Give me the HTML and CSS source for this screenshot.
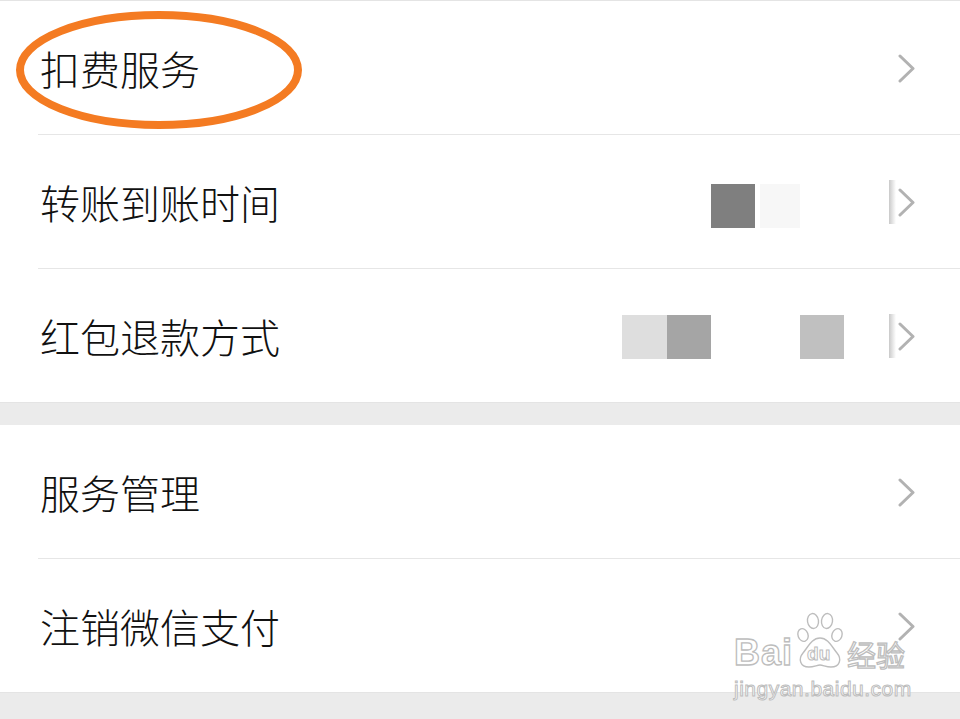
FILE: index.html
```html
<!DOCTYPE html>
<html lang="zh">
<head>
<meta charset="utf-8">
<link rel="stylesheet" href="styles.css">
</head>
<body>
<div class="page">
  <div class="topline"></div>
  <section class="group">
    <div class="row first">
      <span class="label">扣费服务</span>
      <span class="spacer"></span>
      <svg class="chev" viewBox="0 0 17 29"><path d="M2 2 L15 14.5 L2 27" /></svg>
      <svg class="ring" viewBox="0 0 300 130"><ellipse cx="143" cy="65" rx="139" ry="55" /></svg>
    </div>
    <div class="row">
      <span class="label">转账到账时间</span>
      <span class="spacer"></span>
      <span class="blur b2">
        <i class="blk dark"></i><i class="blk faint gap5"></i>
      </span>
      <i class="fade"></i>
      <svg class="chev" viewBox="0 0 17 29"><path d="M2 2 L15 14.5 L2 27" /></svg>
    </div>
    <div class="row last">
      <span class="label">红包退款方式</span>
      <span class="spacer"></span>
      <span class="blur b3">
        <i class="blk light"></i><i class="blk mid2"></i><i class="blk mid gap89"></i>
      </span>
      <i class="fade"></i>
      <svg class="chev" viewBox="0 0 17 29"><path d="M2 2 L15 14.5 L2 27" /></svg>
    </div>
  </section>
  <div class="band"></div>
  <section class="group">
    <div class="row">
      <span class="label">服务管理</span>
      <span class="spacer"></span>
      <svg class="chev" viewBox="0 0 17 29"><path d="M2 2 L15 14.5 L2 27" /></svg>
    </div>
    <div class="row last">
      <span class="label">注销微信支付</span>
      <span class="spacer"></span>
      <svg class="chev" viewBox="0 0 17 29"><path d="M2 2 L15 14.5 L2 27" /></svg>
    </div>
  </section>
  <div class="band bottom"></div>
  <div class="watermark">
    <div class="wm-top">
      <span class="wm-bai">Bai</span>
      <span class="paw">
        <svg viewBox="0 0 52 58">
          <ellipse cx="9" cy="24" rx="5" ry="6.5" transform="rotate(-20 9 24)"/>
          <ellipse cx="19" cy="10" rx="5.5" ry="7.5" transform="rotate(-8 19 10)"/>
          <ellipse cx="33" cy="10" rx="5.5" ry="7.5" transform="rotate(8 33 10)"/>
          <ellipse cx="43" cy="24" rx="5" ry="6.5" transform="rotate(20 43 24)"/>
          <path d="M26 27 C18 27 14 36 9 42 C4 48 6 56 15 56 C20 56 23 54 26 54 C29 54 32 56 37 56 C46 56 48 48 43 42 C38 36 34 27 26 27 Z"/>
        </svg>
        <span class="paw-du">du</span>
      </span>
      <span class="wm-jy">经验</span>
    </div>
    <div class="wm-url">jingyan.baidu.com</div>
  </div>
</div>
</body>
</html>
```
FILE: styles.css
```css
html, body {
  margin: 0;
  padding: 0;
  background: #ffffff;
}
.page {
  position: relative;
  width: 960px;
  height: 719px;
  overflow: hidden;
  font-family: "Noto Sans CJK SC", "Noto Sans", sans-serif;
}
.topline {
  height: 1px;
  background: #e4e4e4;
}
.group {
  background: #ffffff;
}
.row {
  position: relative;
  display: flex;
  align-items: center;
  height: 133px;
  padding: 0 45px 0 40px;
  border-bottom: 1px solid transparent;
}
.row::after {
  content: "";
  position: absolute;
  left: 38px;
  right: 0;
  bottom: -1px;
  height: 1px;
  background: #e6e6e6;
}
.row.last {
  border-bottom: none;
}
.row.last::after {
  display: none;
}
.label {
  font-size: 40px;
  font-weight: 300;
  line-height: 1;
  color: #111111;
  letter-spacing: 0;
  margin-top: 0;
}
.spacer {
  flex: 1;
}
.chev {
  width: 17px;
  height: 29px;
  margin-top: 2px;
}
.chev path {
  fill: none;
  stroke: #b2b2b2;
  stroke-width: 3;
  stroke-linecap: round;
  stroke-linejoin: round;
}
.ring {
  position: absolute;
  left: 16px;
  top: 4px;
  width: 300px;
  height: 130px;
  overflow: visible;
}
.ring ellipse {
  fill: none;
  stroke: #f47b22;
  stroke-width: 8;
}
.blur {
  display: flex;
  align-items: center;
  height: 44px;
  margin-top: 8px;
}
.b2 {
  margin-right: 89px;
}
.b3 {
  margin-right: 45px;
  margin-top: 2px;
}
.blk {
  display: block;
  width: 44px;
  height: 44px;
}
.dark { background: #7f7f7f; }
.faint { background: #f7f7f7; width: 40px; }
.light { background: #dedede; width: 45px; }
.mid2 { background: #a5a5a5; }
.mid { background: #c0c0c0; }
.gap5 { margin-left: 5px; }
.gap89 { margin-left: 89px; }
.fade {
  display: block;
  width: 7px;
  height: 44px;
  margin-right: 2px;
  background: linear-gradient(to right, #c9c9c9, #ffffff);
}
.band {
  height: 23px;
  background: #ebebeb;
  border-top: 1px solid #e4e4e4;
  box-sizing: border-box;
}
.bottom {
  height: 27px;
}
.watermark {
  position: absolute;
  left: 734px;
  top: 611px;
  width: 180px;
  font-family: "Liberation Sans", Arial, sans-serif;
  color: #ffffff;
}
.wm-top {
  display: flex;
  align-items: flex-end;
  height: 58px;
}
.wm-bai {
  font-size: 36px;
  font-weight: bold;
  line-height: 1;
  color: #ffffff;
  -webkit-text-stroke: 1.3px #bdbdbd;
  letter-spacing: 1px;
  margin-bottom: -2px;
}
.paw {
  position: relative;
  width: 52px;
  height: 58px;
  margin-left: 1px;
}
.paw svg {
  width: 52px;
  height: 58px;
  display: block;
}
.paw svg ellipse, .paw svg path {
  fill: #ffffff;
  stroke: #bdbdbd;
  stroke-width: 1.4;
}
.paw-du {
  position: absolute;
  left: 13px;
  top: 33px;
  font-size: 19px;
  font-weight: bold;
  line-height: 1;
  color: #ffffff;
  -webkit-text-stroke: 1px #bdbdbd;
}
.wm-jy {
  font-family: "Noto Sans CJK SC", sans-serif;
  font-size: 29px;
  line-height: 1;
  color: #ffffff;
  -webkit-text-stroke: 1.3px #bdbdbd;
  margin-left: 1px;
  margin-bottom: 0;
}
.wm-url {
  font-size: 21px;
  line-height: 1;
  margin-top: 9px;
  color: #ffffff;
  -webkit-text-stroke: 1px #bdbdbd;
  letter-spacing: 0.5px;
}
```
